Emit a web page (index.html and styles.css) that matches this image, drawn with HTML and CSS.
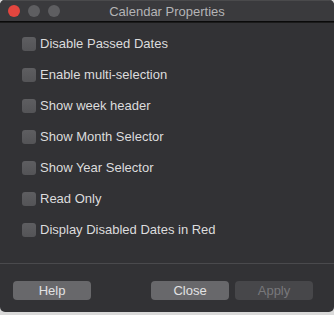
FILE: index.html
```html
<!DOCTYPE html>
<html>
<head>
<meta charset="utf-8">
<link rel="stylesheet" href="styles.css">
</head>
<body>
<div class="window">
  <div class="titlebar">
    <div class="lights">
      <span class="light red"></span>
      <span class="light gray"></span>
      <span class="light gray"></span>
    </div>
    <div class="title">Calendar Properties</div>
  </div>
  <div class="content">
    <div class="options">
      <label class="opt"><span class="box"></span><span class="lbl">Disable Passed Dates</span></label>
      <label class="opt"><span class="box"></span><span class="lbl">Enable multi-selection</span></label>
      <label class="opt"><span class="box"></span><span class="lbl">Show week header</span></label>
      <label class="opt"><span class="box"></span><span class="lbl">Show Month Selector</span></label>
      <label class="opt"><span class="box"></span><span class="lbl">Show Year Selector</span></label>
      <label class="opt"><span class="box"></span><span class="lbl">Read Only</span></label>
      <label class="opt"><span class="box"></span><span class="lbl">Display Disabled Dates in Red</span></label>
    </div>
    <div class="sep"></div>
    <div class="buttons">
      <button class="btn">Help</button>
      <div class="spacer"></div>
      <button class="btn">Close</button>
      <button class="btn disabled">Apply</button>
    </div>
  </div>
</div>
</body>
</html>
```
FILE: styles.css
```css
html, body {
  margin: 0;
  padding: 0;
  background: #d9d9d9;
  width: 334px;
  height: 315px;
  overflow: hidden;
}
body {
  font-family: "Liberation Sans", Arial, sans-serif;
  font-size: 13px;
}
.window {
  width: 334px;
  height: 312px;
  border-radius: 5px;
  background: #323235;
  overflow: hidden;
  box-sizing: border-box;
  display: flex;
  flex-direction: column;
}
.titlebar {
  height: 22px;
  background: #3a3a3d;
  border-top: 1px solid #4a4a4c;
  box-sizing: border-box;
  border-bottom: 1px solid #0a0a0a;
  display: flex;
  align-items: center;
  position: relative;
  flex-shrink: 0;
}
.lights {
  display: flex;
  gap: 8px;
  padding-left: 8px;
}
.light {
  width: 12px;
  height: 12px;
  border-radius: 50%;
  display: block;
}
.red { background: #e3463f; }
.gray { background: #5e5e61; }
.title {
  position: absolute;
  left: 0;
  right: 0;
  top: 3px;
  text-align: center;
  color: #b4b4b6;
  font-size: 13px;
  line-height: 16px;
}
.content {
  flex: 1;
  display: flex;
  flex-direction: column;
  border-top: 1px solid #1a1a1a;
}
.options {
  display: flex;
  flex-direction: column;
  padding: 13px 0 0 22px;
  gap: 15px;
}
.opt {
  display: flex;
  align-items: center;
  height: 16px;
  gap: 4px;
  color: #dcdcdd;
}
.box {
  width: 14px;
  height: 14px;
  border-radius: 3px;
  background: linear-gradient(#5e5e61, #545457);
  box-sizing: border-box;
  flex-shrink: 0;
}
.lbl {
  line-height: 16px;
}
.sep {
  margin-top: 25px;
  height: 1px;
  background: #4a4a4d;
}
.buttons {
  display: flex;
  padding: 17px 21px 0 13px;
  gap: 6px;
}
.spacer { flex: 1; }
.btn {
  width: 78px;
  height: 19px;
  border: none;
  border-radius: 4px;
  background: #68686b;
  color: #e2e2e3;
  font-family: "Liberation Sans", Arial, sans-serif;
  font-size: 13px;
  padding: 0;
  line-height: 19px;
}
.btn.disabled {
  background: #47474a;
  color: #78787b;
}
```
